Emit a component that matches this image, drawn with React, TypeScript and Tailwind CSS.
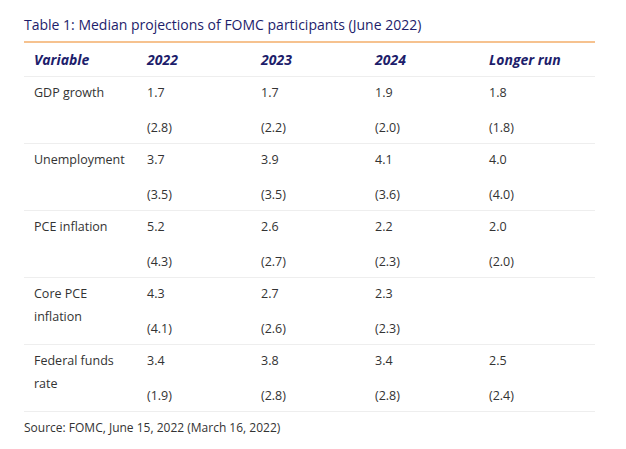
const rows: { label: string[]; values: [string, string][] }[] = [
  { label: ["GDP growth"], values: [["1.7", "(2.8)"], ["1.7", "(2.2)"], ["1.9", "(2.0)"], ["1.8", "(1.8)"]] },
  { label: ["Unemployment"], values: [["3.7", "(3.5)"], ["3.9", "(3.5)"], ["4.1", "(3.6)"], ["4.0", "(4.0)"]] },
  { label: ["PCE inflation"], values: [["5.2", "(4.3)"], ["2.6", "(2.7)"], ["2.2", "(2.3)"], ["2.0", "(2.0)"]] },
  { label: ["Core PCE", "inflation"], values: [["4.3", "(4.1)"], ["2.7", "(2.6)"], ["2.3", "(2.3)"], ["", ""]] },
  { label: ["Federal funds", "rate"], values: [["3.4", "(1.9)"], ["3.8", "(2.8)"], ["3.4", "(2.8)"], ["2.5", "(2.4)"]] },
];

const headers = ["Variable", "2022", "2023", "2024", "Longer run"];

export default function App() {
  return (
    <div className="min-h-screen bg-white pl-6 pt-[14px] text-[#333] font-['Open_Sans',sans-serif]">
      <h1 className="text-[14px] leading-[22px] text-[#1d1d6b]">
        Table 1: Median projections of FOMC participants (June 2022)
      </h1>

      <div className="mt-[5px] w-[571px] border-t-[2px] border-[#f6c28f]">
        <div className="grid grid-cols-[113px_114px_114px_114px_1fr] h-[34px] items-center border-b border-[#eeeeee]">
          {headers.map((h) => (
            <div key={h} className="pl-[10px] text-[14px] font-bold italic text-[#1d1d6b]">
              {h}
            </div>
          ))}
        </div>

        {rows.map((r) => (
          <div
            key={r.label[0]}
            className="grid grid-cols-[113px_114px_114px_114px_1fr] border-b border-[#eeeeee] pt-[4px] pb-[4px] text-[12.5px]"
          >
            <div className="pl-[10px] leading-[23px]">
              {r.label.map((l) => (
                <div key={l}>{l}</div>
              ))}
            </div>
            {r.values.map((v, i) => (
              <div key={i} className="pl-[10px] leading-[23px] flex flex-col gap-[12px]">
                <div className="h-[23px]">{v[0]}</div>
                <div className="h-[23px]">{v[1]}</div>
              </div>
            ))}
          </div>
        ))}
      </div>

      <p className="mt-[6px] text-[12px] leading-[20px]">Source: FOMC, June 15, 2022 (March 16, 2022)</p>
    </div>
  );
}
